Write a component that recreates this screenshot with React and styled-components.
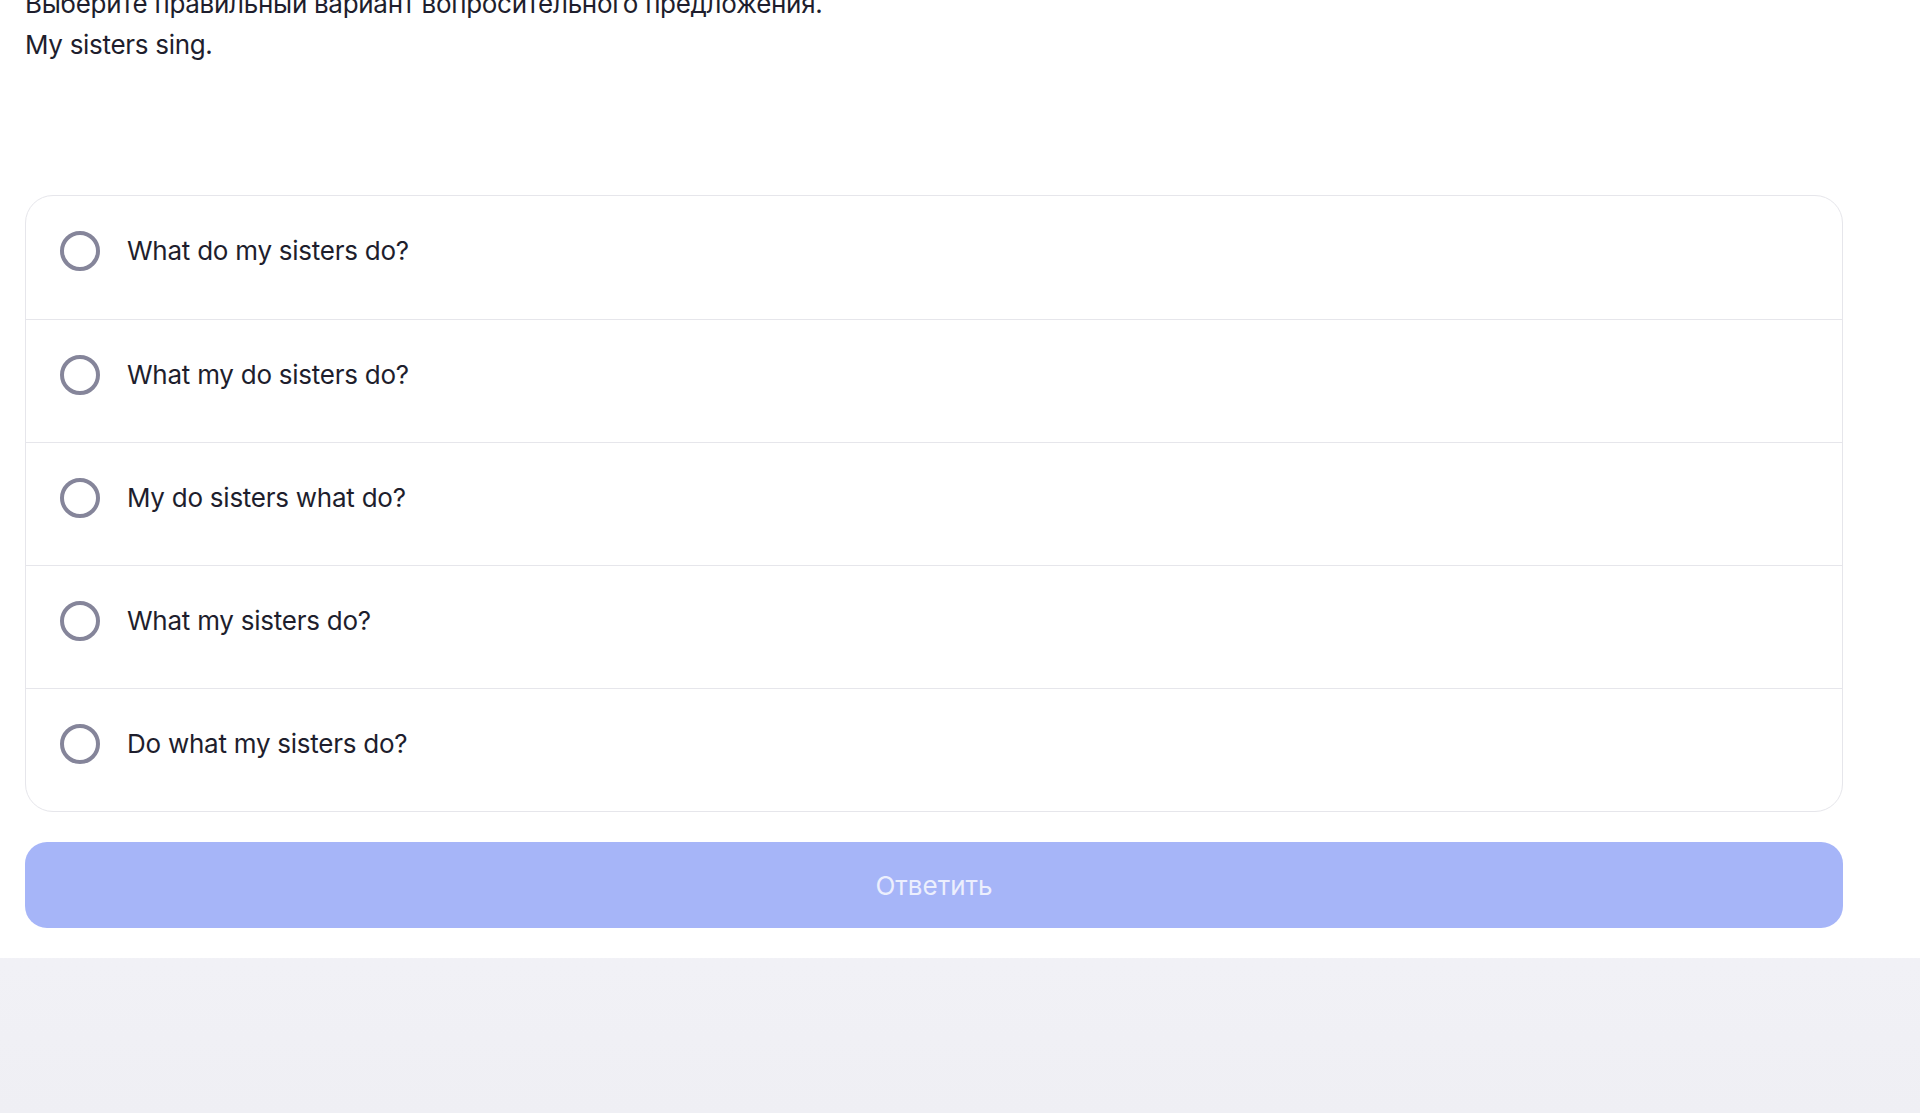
import React, { useState } from 'react'
import styled, { createGlobalStyle } from 'styled-components'

const GlobalStyle = createGlobalStyle`
  html, body {
    margin: 0;
    padding: 0;
    background: #f2f2f7;
  }

  body {
    font-family: Inter, 'Noto Sans', sans-serif;
    -webkit-font-smoothing: antialiased;
  }
`

const Page = styled.div`
  min-height: 100vh;
  overflow: hidden;
  background: linear-gradient(180deg, #f2f2f7 80%, #efeff4 100%);
`

const Section = styled.section`
  display: flex;
  flex-direction: column;
  padding: 0 77px 30px 25px;
  background: #ffffff;
`

const Prompt = styled.div`
  margin-top: -17px;

  font-size: 26px;
  line-height: 41px;
  letter-spacing: -0.3px;
  color: #1e1e2d;
`

const Options = styled.div`
  display: flex;
  flex-direction: column;

  margin-top: 130px;

  border: 1px solid #e6e6eb;
  border-radius: 28px;
  background: #ffffff;
  overflow: hidden;
`

const Option = styled.label`
  display: flex;
  align-items: center;
  gap: 27px;

  height: 123px;
  box-sizing: border-box;
  padding: 0 34px 13px 34px;

  cursor: pointer;

  & + & {
    border-top: 1px solid #e6e6eb;
  }
`

const Radio = styled.span`
  flex: none;
  width: 40px;
  height: 40px;
  box-sizing: border-box;

  border-radius: 50%;
  border: 4px solid ${(p) => (p.$checked ? '#5b6ef5' : '#85859a')};
  background: ${(p) => (p.$checked ? 'radial-gradient(#5b6ef5 40%, #fff 44%)' : '#fff')};
`

const OptionText = styled.span`
  font-size: 26px;
  line-height: 32px;
  letter-spacing: -0.25px;
  color: #1e1e2d;
`

const Submit = styled.button`
  margin-top: 30px;
  height: 86px;

  border: none;
  border-radius: 22px;
  background: #a6b5f8;

  font-family: Inter, 'Noto Sans', sans-serif;
  font-size: 26px;
  color: #eceffd;

  cursor: default;
`

const answers = [
  'What do my sisters do?',
  'What my do sisters do?',
  'My do sisters what do?',
  'What my sisters do?',
  'Do what my sisters do?',
]

const App = () => {
  const [picked, setPicked] = useState(null)

  return (
    <Page>
      <GlobalStyle />
      <Section>
        <Prompt>
          Выберите правильный вариант вопросительного предложения.
          <br />
          My sisters sing.
        </Prompt>

        <Options>
          {answers.map((text, i) => (
            <Option key={text} onClick={() => setPicked(i)}>
              <Radio $checked={picked === i} />
              <OptionText>{text}</OptionText>
            </Option>
          ))}
        </Options>

        <Submit disabled={picked === null}>Ответить</Submit>
      </Section>
    </Page>
  )
}

export default App
